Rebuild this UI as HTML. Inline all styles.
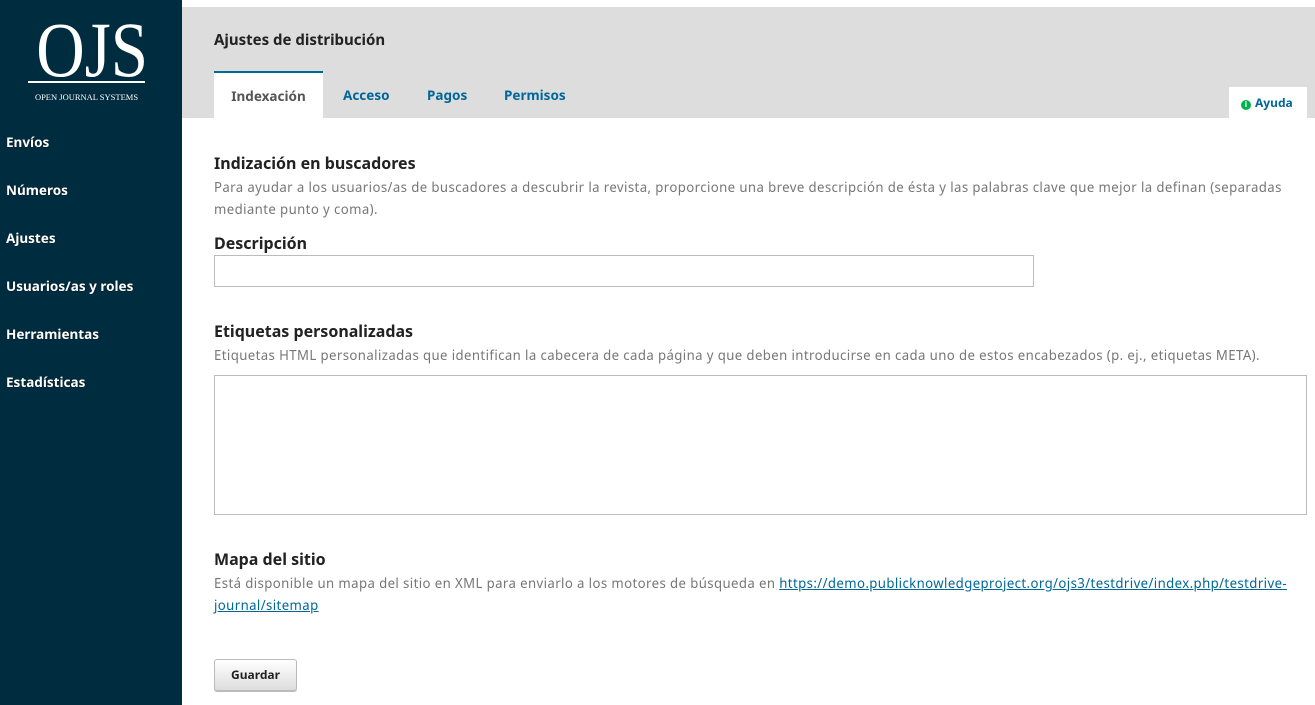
<!DOCTYPE html>
<html><head><meta charset="utf-8"><style>
*{box-sizing:border-box;margin:0;padding:0}
body{width:1315px;height:705px;overflow:hidden;background:#fff;font-family:"Noto Sans","DejaVu Sans","Liberation Sans",sans-serif;position:relative;color:#222}
.side{position:absolute;left:0;top:0;width:182px;height:705px;background:#002c40}
.big{position:absolute;left:28px;top:10px;width:117px;text-align:center;color:#fff;font-family:"Liberation Serif",serif;font-size:78px;line-height:80px;transform:scaleX(.86);transform-origin:center;white-space:nowrap}
.ln{position:absolute;left:28px;top:81px;width:117px;border-top:2px solid #fff}
.small{position:absolute;left:28px;top:92px;width:117px;text-align:center;color:#fff;font-family:"Liberation Serif",serif;font-size:8.5px;white-space:nowrap}
.nav{position:absolute;left:6px;color:#fff;font-weight:bold;font-size:13.5px;text-shadow:0 0 1px #000}
.hdr{position:absolute;left:182px;top:7px;width:1133px;height:111px;background:#ddd}
.title{position:absolute;left:214px;top:30px;font-size:15px;font-weight:bold}
.tab{position:absolute;top:86px;font-size:13.5px;font-weight:bold;color:#006798}
.tab1{position:absolute;left:214px;top:71px;width:109px;height:47px;background:#fff;border-top:2px solid #006798;color:#555;font-weight:bold;font-size:13.5px;text-align:center;padding-top:14px}
.help{position:absolute;left:1229px;top:87px;width:78px;height:31px;background:#fff;font-size:12px;font-weight:bold;color:#006798;padding:7px 0 0 12px}
.help i{display:inline-block;width:10px;height:10px;border-radius:50%;background:#00b24e;color:#fff;font-size:8px;font-style:normal;text-align:center;line-height:10px;vertical-align:0;margin-right:4px}
h3{position:absolute;left:214px;font-size:16px;font-weight:bold;color:#222}
p{position:absolute;left:214px;width:1096px;font-size:13.2px;letter-spacing:.4px;color:#777;line-height:22px}
a{color:#006798;text-decoration:underline}
.in{position:absolute;border:1px solid #bbb;background:#fff}
.btn{position:absolute;left:214px;top:659px;width:83px;height:32px;border:1px solid #bbb;border-radius:3px;background:linear-gradient(#fff,#ddd);font-size:12px;font-weight:bold;text-align:center;line-height:30px;box-shadow:0 1px 0 #bbb}
</style></head><body>
<div class="side">
<div class="big">OJS</div><div class="ln"></div><div class="small">OPEN JOURNAL SYSTEMS</div>
<div class="nav" style="top:133px">Envíos</div>
<div class="nav" style="top:181px">Números</div>
<div class="nav" style="top:229px">Ajustes</div>
<div class="nav" style="top:277px">Usuarios/as y roles</div>
<div class="nav" style="top:325px">Herramientas</div>
<div class="nav" style="top:373px">Estadísticas</div>
</div>
<div class="hdr"></div>
<div class="title">Ajustes de distribución</div>
<div class="tab1">Indexación</div>
<div class="tab" style="left:343px">Acceso</div>
<div class="tab" style="left:427px">Pagos</div>
<div class="tab" style="left:504px">Permisos</div>
<div class="help"><i>i</i>Ayuda</div>
<h3 style="top:152px">Indización en buscadores</h3>
<p style="top:176px">Para ayudar a los usuarios/as de buscadores a descubrir la revista, proporcione una breve descripción de ésta y las palabras clave que mejor la definan (separadas mediante punto y coma).</p>
<h3 style="top:232px">Descripción</h3>
<div class="in" style="left:214px;top:255px;width:820px;height:32px"></div>
<h3 style="top:320px">Etiquetas personalizadas</h3>
<p style="top:344px">Etiquetas HTML personalizadas que identifican la cabecera de cada página y que deben introducirse en cada uno de estos encabezados (p. ej., etiquetas META).</p>
<div class="in" style="left:214px;top:375px;width:1093px;height:140px"></div>
<h3 style="top:548px">Mapa del sitio</h3>
<p style="top:572px">Está disponible un mapa del sitio en XML para enviarlo a los motores de búsqueda en <a>https://demo.publicknowledgeproject.org/ojs3/testdrive/index.php/testdrive-journal/sitemap</a></p>
<div class="btn">Guardar</div>
</body></html>
